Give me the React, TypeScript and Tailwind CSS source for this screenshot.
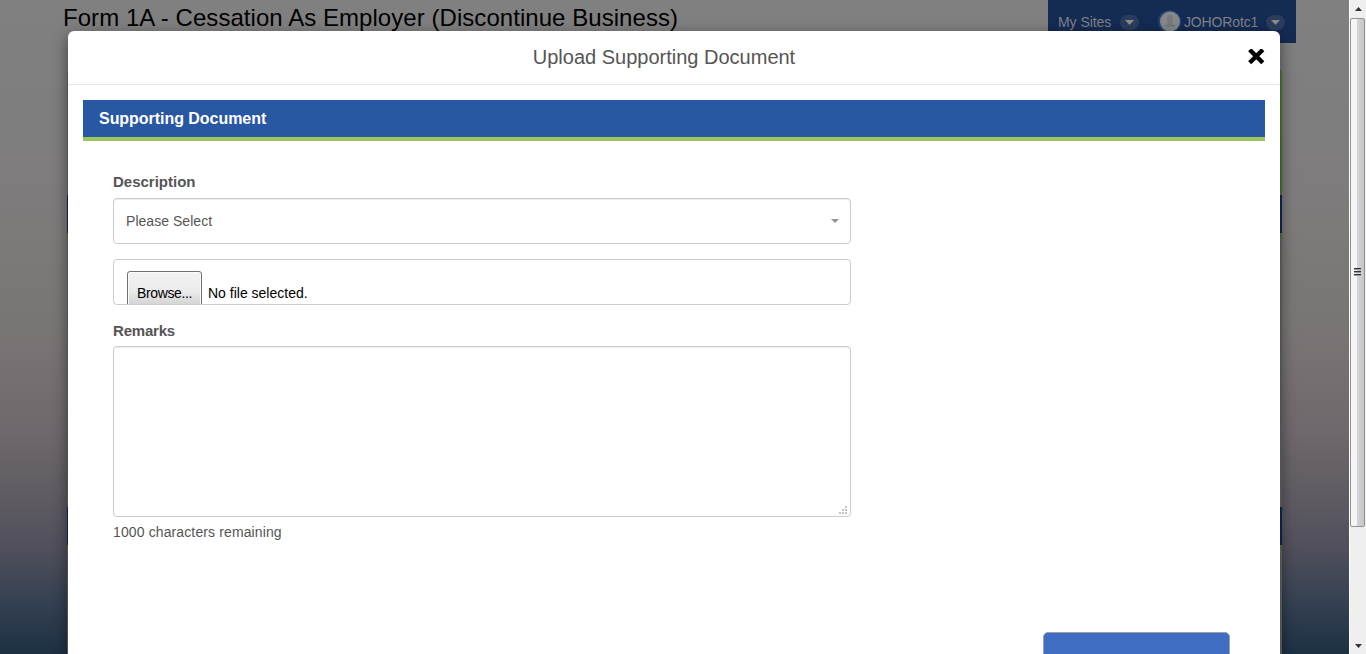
import React from "react";

function Caret() {
  return (
    <span className="flex h-[15px] w-[19px] items-center justify-center rounded-full bg-[#2b3d5e]">
      <svg width="9" height="5" viewBox="0 0 9 5"><path d="M0 0h9L4.500 5z" fill="#8f8c88" /></svg>
    </span>
  );
}

function SectionBar() {
  return <div className="h-[42px] shrink-0 border-b-4 border-[#567d2a] bg-[#142b54]" />;
}

function PageBehind() {
  return (
    <div className="flex h-full flex-col overflow-hidden">
      <div className="flex h-[43px] shrink-0 items-start justify-between pl-[63px] pr-[53px]">
        <h1 className="pt-[4px] text-[24px] leading-[28px] tracking-[0.052px] whitespace-nowrap text-black">
          Form 1A - Cessation As Employer (Discontinue Business)
        </h1>
        <div className="flex h-[43px] w-[248px] items-center bg-[#142b54] pt-px pl-[10px] text-[14px] text-[#808285]">
          <span className="w-[62px] whitespace-nowrap tracking-[-0.05px]">My Sites</span>
          <Caret />
          <svg className="ml-[19px]" width="24" height="24" viewBox="0 0 24 24">
            <circle cx="11.500" cy="11.500" r="11.500" fill="#1f4372" />
            <circle cx="12" cy="11.500" r="10" fill="#858789" />
            <path d="M9 8a3 3 0 0 1 6 0v3l-1 2 3 2v2H7v-2l3-2-1-2z" fill="#777a7c" />
          </svg>
          <span className="ml-[2px] w-[82px] whitespace-nowrap tracking-[-0.15px]">JOHORotc1</span>
          <Caret />
        </div>
      </div>
      <div className="ml-[67px] mt-[25px] flex w-[1215px] grow flex-col rounded-t-md bg-[#6a6b6b]">
        <div className="mb-[2px] h-[125px] shrink-0 rounded-t-md border-r-2 border-[#4f7d2c]" />
        <SectionBar />
        <div className="h-[270px] shrink-0" />
        <SectionBar />
      </div>
    </div>
  );
}

function Scrollbar() {
  return (
    <div className="flex h-full w-[17px] shrink-0 flex-col border-l border-white bg-[#efefef]">
      <div className="flex h-[18px] items-center justify-center">
        <svg width="7" height="4" viewBox="0 0 7 4"><path d="M0 4h7L3.500 0z" fill="#333" /></svg>
      </div>
      <div className="flex h-[509px] w-[15px] flex-col items-center justify-center gap-px rounded-[2px] border border-[#929292] bg-linear-to-r from-[#f5f5f5] from-45% via-[#d3d3d7] via-50% to-[#c6c6ca] pb-[2px]">
        <i className="h-[2px] w-[7px] border-t border-[#333] bg-[#999]" />
        <i className="h-[2px] w-[7px] border-t border-[#333] bg-[#999]" />
        <i className="h-[2px] w-[7px] border-t border-[#333] bg-[#999]" />
      </div>
      <div className="mt-auto flex h-[17px] items-center justify-center">
        <svg width="7" height="4" viewBox="0 0 7 4"><path d="M0 0h7L3.500 4z" fill="#333" /></svg>
      </div>
    </div>
  );
}

function UploadDialog() {
  return (
    <div
      role="dialog"
      className="absolute top-[31px] left-[68px] flex h-[640px] w-[1212px] flex-col rounded-t-[6px] bg-white shadow-[0_5px_15px_rgba(0,0,0,0.5)]"
    >
      <div className="flex h-[54px] shrink-0 items-center border-b border-[#e5e5e5] pr-[15px] pb-[2px] pl-[35px]">
        <h2 className="grow pr-[23px] text-center text-[20px] leading-[24px] text-[#555]">Upload Supporting Document</h2>
        <button aria-label="Close" className="flex h-4 w-[17px] items-center justify-center">
          <svg width="17" height="16" viewBox="0 0 17 16">
            <path d="M3.250 2.250l10 10M13.250 2.250l-10 10" stroke="#000" strokeWidth="4.400" strokeLinecap="square" />
          </svg>
        </button>
      </div>
      <div className="mx-[15px] mt-[15px] flex h-[41px] shrink-0 items-center border-b-4 border-[#9bc75a] bg-[#2857a4] pl-[16px] text-[16px] font-bold tracking-[-0.04px] text-white">
        Supporting Document
      </div>
      <div className="ml-[45px] flex w-[738px] flex-col pt-[31px] text-[14px] leading-[20px] text-[#555]">
        <label className="h-[26px] text-[15px] font-bold">Description</label>
        <div className="flex h-[46px] items-center justify-between rounded-[4px] border border-[#ccc] pr-[11px] pl-[12px] shadow-[inset_0_1px_1px_rgba(0,0,0,0.075)]">
          <span className="tracking-[0.04px]">Please Select</span>
          <svg width="8" height="4" viewBox="0 0 8 4"><path d="M0 0h8L4 4z" fill="#929292" /></svg>
        </div>
        <div className="mt-[15px] flex h-[46px] items-start overflow-hidden rounded-[4px] border border-[#ccc] pt-[11px] pl-[13px] text-black">
          <div className="flex h-[44px] w-[75px] shrink-0 items-center justify-center rounded-[3px] border border-[#707070] bg-linear-to-b from-[#f2f2f2] from-0% via-[#ebebeb] via-45% to-[#c4c4c4] tracking-[-0.35px] shadow-[inset_0_0_0_1px_#fafafa]">
            Browse...
          </div>
          <span className="pt-[12px] pl-[6px]">No file selected.</span>
        </div>
        <label className="mt-[16px] h-[25px] text-[15px] font-bold tracking-[-0.2px]">Remarks</label>
        <div className="flex h-[171px] items-end justify-end rounded-[4px] border border-[#ccc] pr-[3px] pb-[2px] shadow-[inset_0_1px_1px_rgba(0,0,0,0.075)]">
          <svg width="8" height="8" viewBox="0 0 8 8" fill="#c4c4c4">
            <path d="M6 0h2v2H6zM3 3h2v2H3zM6 3h2v2H6zM0 6h2v2H0zM3 6h2v2H3zM6 6h2v2H6z" />
          </svg>
        </div>
        <p className="mt-[5px] tracking-[0.12px]">1000 characters remaining</p>
      </div>
      <div className="mt-auto mr-[50px] h-[39px] w-[187px] shrink-0 self-end rounded-t-[5px] border border-[#999ea9] bg-[#3e6dc1]" />
    </div>
  );
}

export default function App() {
  return (
    <main className="flex h-[654px] w-[1366px] overflow-hidden font-['Liberation_Sans',sans-serif]">
      <div className="relative h-full w-[1349px] overflow-hidden bg-[linear-gradient(180deg,#808080_0%,#7e7c7c_28%,#7a7575_50%,#6f686c_66%,#625e64_74%,#504f5b_84%,#354152_92%,#1d3044_100%)]">
        <PageBehind />
        <UploadDialog />
      </div>
      <Scrollbar />
    </main>
  );
}
